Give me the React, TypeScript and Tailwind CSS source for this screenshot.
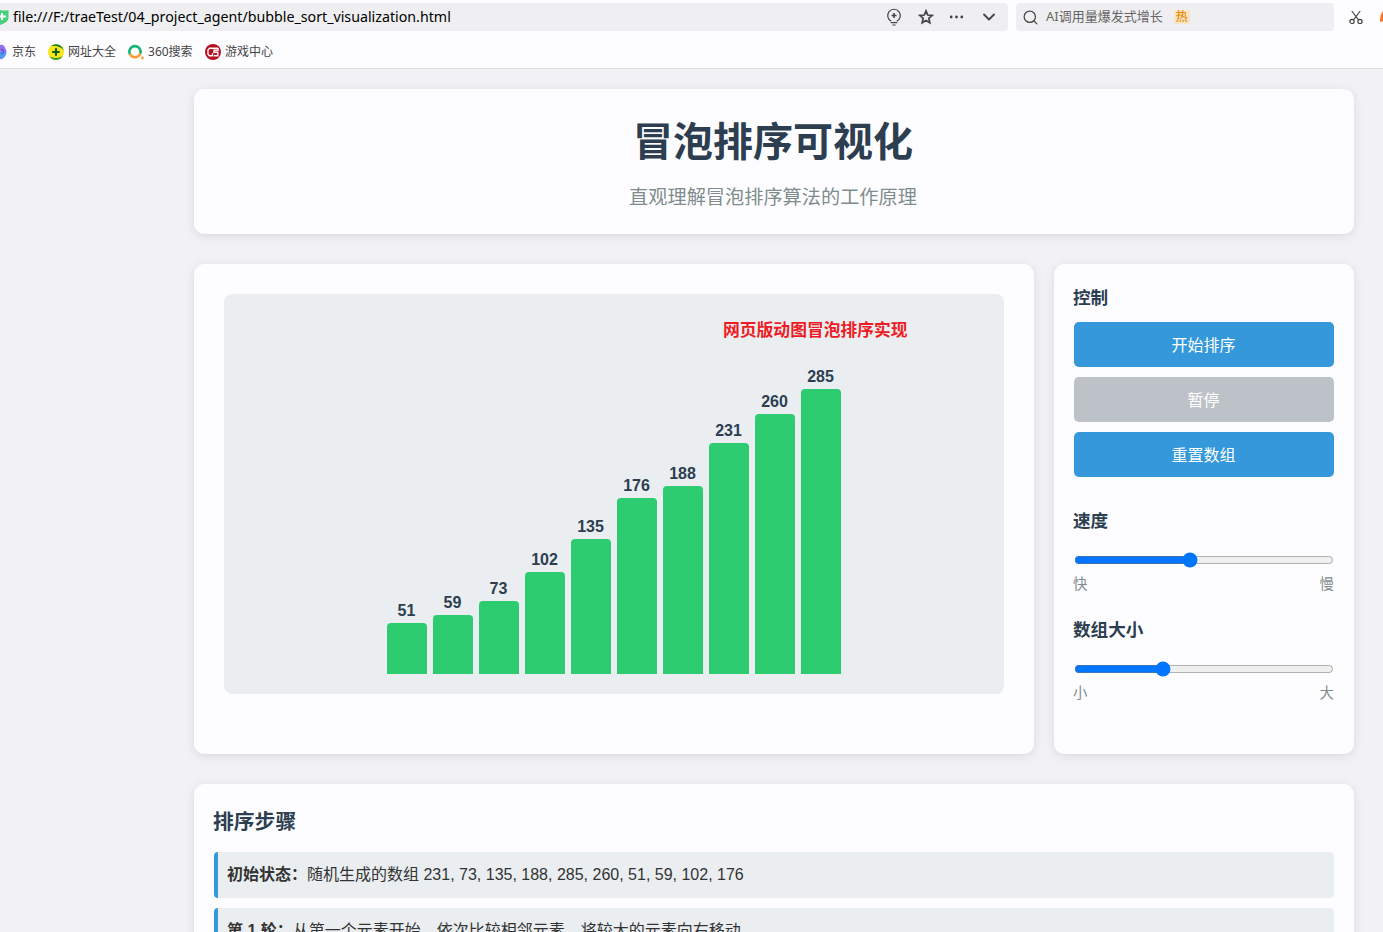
import { useState } from 'react';
import { ChevronDown, Search } from 'lucide-react';

const values = [51, 59, 73, 102, 135, 176, 188, 231, 260, 285];

const steps = [
  { title: '初始状态：', text: '随机生成的数组 231, 73, 135, 188, 285, 260, 51, 59, 102, 176' },
  { title: '第 1 轮：', text: '从第一个元素开始，依次比较相邻元素，将较大的元素向右移动' },
];

function BulbIcon() {
  return (
    <svg width="16" height="18" viewBox="0 0 16 18" fill="none" stroke="#444" strokeWidth="1.2">
      <path d="M5.2 13.2A6.3 6.3 0 1 1 10.8 13.2" />
      <path d="M8 5v5M5.5 7.5h5" strokeWidth="1.6" />
      <path d="M4.8 14.6h6.4M6.4 17h3.2" />
    </svg>
  );
}

function StarIcon() {
  return (
    <svg width="16" height="16" viewBox="0 0 16 16" fill="none" stroke="#444" strokeWidth="1.7">
      <path d="M8 1.9l1.7 4.1 4.5.4-3.4 2.9 1 4.4L8 11.4l-3.8 2.3 1-4.4-3.4-2.9 4.5-.4z" />
    </svg>
  );
}

function ScissorsIcon() {
  return (
    <svg width="16" height="16" viewBox="0 0 16 16" fill="none" stroke="#444" strokeWidth="1.2">
      <path d="M3.8 2l6.7 8.8M12.2 2L5.5 10.8" />
      <circle cx="4" cy="12.4" r="2.1" />
      <circle cx="12" cy="12.4" r="2.1" />
    </svg>
  );
}

function SiteIcon() {
  return (
    <svg width="16" height="16" viewBox="0 0 16 16">
      <circle cx="8" cy="8" r="8" fill="#f8e71c" />
      <path d="M3 2A8 8 0 0 1 15.8 7C14 3 9 1.5 3 2z" fill="#16812d" />
      <path d="M1.5 12.6A8 8 0 0 0 15 11.8C12 14.4 6 14.6 1.5 12.6z" fill="#3a9a26" />
      <path d="M8 4.3v7.4M4.3 8h7.4" stroke="#075c1c" strokeWidth="2.1" />
    </svg>
  );
}

function SearchSiteIcon() {
  return (
    <svg width="16" height="16" viewBox="0 0 16 16" fill="none" strokeWidth="2.6">
      <path d="M2 10.2A5.6 5.6 0 1 1 12.2 9.8" stroke="#16b572" />
      <path d="M2 10A5.6 5.6 0 0 0 12.2 9.8" stroke="#ff9c38" />
      <circle cx="14.4" cy="14" r="1.4" fill="#ff9c38" />
    </svg>
  );
}

function GameIcon() {
  return (
    <svg width="16" height="16" viewBox="0 0 16 16" fill="none">
      <circle cx="8" cy="8" r="8" fill="#b50f20" />
      <path d="M8 4.2H4.6L3 5.8v4.4l1.6 1.6h3V9.2M13.3 4.2v1.2M13.6 6.2H9v2h3.8v3.6H9M8 4.2h5" stroke="#fff" strokeWidth="1.4" />
    </svg>
  );
}

function BrowserBar() {
  return (
    <header className="h-[69px] shrink-0 border-b border-[#dededf] bg-[#fdfdff] pt-[3px] font-['Noto_Sans','Noto_Sans_CJK_SC',sans-serif]">
      <div className="flex h-7 items-center">
        <div className="flex h-7 w-[1008px] items-center rounded-r bg-[#efeff1]">
          <svg className="shrink-0" width="9" height="16" viewBox="0 0 9 16">
            <path d="M0 1q4 1 8.5 0v8q0 4-8.5 7z" fill="#46d17d" />
            <path d="M0 7.6h6M2 4v7" stroke="#fff" strokeWidth="2" />
          </svg>
          <span className="ml-1 w-[438px] text-[14.22px] leading-7 whitespace-nowrap text-black">
            file:///F:/traeTest/04_project_agent/bubble_sort_visualization.html
          </span>
          <div className="ml-auto flex items-center pr-[9px]">
            <BulbIcon />
            <span className="ml-4"><StarIcon /></span>
            <svg className="ml-[15px]" width="15" height="4" viewBox="0 0 15 4" fill="#444">
              <circle cx="2.2" cy="2" r="1.4" />
              <circle cx="7.5" cy="2" r="1.4" />
              <circle cx="12.8" cy="2" r="1.4" />
            </svg>
            <ChevronDown size={20} color="#444" strokeWidth={2.2} className="ml-[15px]" />
          </div>
        </div>
        <div className="ml-2 flex h-7 w-[318px] items-center rounded bg-[#efeff1] pl-1.5">
          <Search size={17} color="#444" strokeWidth={1.8} />
          <span className="ml-[7px] text-[13px] text-[#666]">AI调用量爆发式增长</span>
          <span className="ml-[11px] flex h-[14px] w-4 items-center justify-center bg-[#f6e6c5] text-[12px] font-medium text-[#ee8a0c]">热</span>
        </div>
        <div className="ml-[14px]">
          <ScissorsIcon />
        </div>
        <svg className="ml-4" width="3" height="16" viewBox="0 0 3 16">
          <path d="M3 2Q0 6 0 12q1 2 3 0z" fill="#ff7424" />
        </svg>
      </div>
      <nav className="flex h-[37px] items-center pt-1 text-[12px] text-[#444]">
        <svg width="7" height="16" viewBox="0 0 7 16">
          <path d="M0 1q4-1 5 3 3 4 0 8-2 4-5 3z" fill="#9170e8" />
          <path d="M0 8h6q0 4-3 6l-3 1z" fill="#4e9cf2" />
          <path d="M1 5l3 2M1 10l3-2" stroke="#5741c7" />
        </svg>
        <span className="ml-[5px]">京东</span>
        <span className="ml-3"><SiteIcon /></span>
        <span className="ml-1">网址大全</span>
        <span className="ml-3"><SearchSiteIcon /></span>
        <span className="ml-1 w-[45px] whitespace-nowrap">360搜索</span>
        <span className="ml-3"><GameIcon /></span>
        <span className="ml-1">游戏中心</span>
      </nav>
    </header>
  );
}

type SliderProps = {
  title: string;
  min: number;
  max: number;
  initial: number;
  left: string;
  right: string;
};

function Slider({ title, min, max, initial, left, right }: SliderProps) {
  const [value, setValue] = useState(initial);

  return (
    <div>
      <h3 className="-ml-px h-7 text-[17.6px] leading-7 font-bold">{title}</h3>
      <input
        type="range"
        aria-label={title}
        min={min}
        max={max}
        value={value}
        onChange={(e) => setValue(Number(e.target.value))}
        className="mt-[17px] block h-4 w-full accent-[#0075ff]"
      />
      <div className="-ml-px mt-[5px] flex h-[23px] justify-between text-[14.4px] leading-[23px] text-[#7f8c8d]">
        <span>{left}</span>
        <span>{right}</span>
      </div>
    </div>
  );
}

export default function App() {
  return (
    <div className="flex h-[932px] w-[1383px] flex-col overflow-hidden bg-[#f2f2f4] font-['Liberation_Sans','Noto_Sans_CJK_SC',sans-serif] text-[#2c3e50]">
      <BrowserBar />
      <main className="ml-[194px] w-[1160px] pt-5">
        <section className="h-[145px] rounded-[10px] bg-[#fdfdff] pt-[21px] pr-0.5 text-center shadow-[0_2px_10px_rgba(0,0,0,0.1)]">
          <h1 className="text-[40px] leading-[64px] font-bold">冒泡排序可视化</h1>
          <p className="mt-2 text-[19.2px] leading-[31px] text-[#7f8c8d]">直观理解冒泡排序算法的工作原理</p>
        </section>

        <div className="mt-[30px] flex gap-5">
          <section className="h-[490px] w-[840px] rounded-[10px] bg-[#fdfdff] p-[30px] shadow-[0_2px_10px_rgba(0,0,0,0.1)]">
            <div className="relative flex h-[400px] items-end justify-center gap-1.5 rounded-lg bg-[#eaeef1] pb-5">
              {values.map((value) => (
                <div key={value} className="flex w-10 flex-col items-center">
                  <span className="h-[25px] pr-px text-base leading-[25px] font-bold">{value}</span>
                  <div className="w-10 rounded-t bg-[#2ecc71]" style={{ height: value }} />
                </div>
              ))}
              <span className="absolute top-[25px] left-[499px] text-[16.8px] leading-6 font-bold whitespace-nowrap text-[#ed1c24]">
                网页版动图冒泡排序实现
              </span>
            </div>
          </section>

          <aside className="h-[490px] w-[300px] rounded-[10px] bg-[#fdfdff] px-5 pt-5 shadow-[0_2px_10px_rgba(0,0,0,0.1)]">
            <h3 className="-ml-px h-7 text-[17.6px] leading-7 font-bold">控制</h3>
            <div className="mt-2.5 flex flex-col gap-2.5">
              <button className="h-[45px] rounded-[5px] bg-[#3498db] pt-0.5 pr-px text-base text-white">开始排序</button>
              <button disabled className="h-[45px] rounded-[5px] bg-[#bdc1c8] pt-0.5 pr-px text-base text-white">暂停</button>
              <button className="h-[45px] rounded-[5px] bg-[#3498db] pt-0.5 pr-px text-base text-white">重置数组</button>
            </div>
            <div className="mt-[30px] flex flex-col gap-5">
              <Slider title="速度" min={100} max={1000} initial={500} left="快" right="慢" />
              <Slider title="数组大小" min={5} max={20} initial={10} left="小" right="大" />
            </div>
          </aside>
        </div>

        <section className="mt-[30px] h-[300px] rounded-[10px] bg-[#fdfdff] p-5 shadow-[0_2px_10px_rgba(0,0,0,0.1)]">
          <h2 className="-ml-px pt-px text-[20.8px] leading-[33px] font-bold">排序步骤</h2>
          <div className="mt-[14px] flex flex-col gap-2.5">
            {steps.map((step) => (
              <p key={step.title} className="h-[46px] rounded border-l-4 border-[#3498db] bg-[#eaeef1] px-[9px] py-2.5 text-base leading-[26px] text-[#333]">
                <strong>{step.title}</strong>
                {step.text}
              </p>
            ))}
          </div>
        </section>
      </main>
    </div>
  );
}
